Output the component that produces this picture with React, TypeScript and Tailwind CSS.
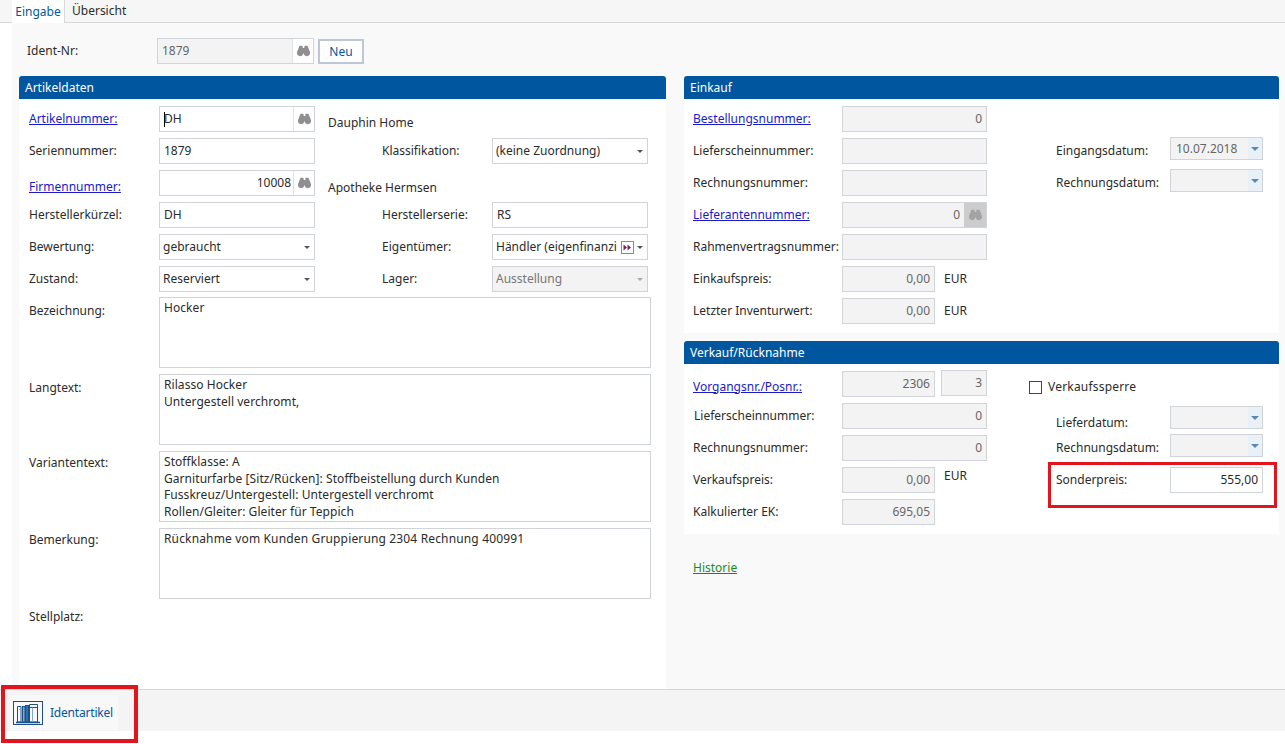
import type { ReactNode } from "react";

function Binoculars({ className = "text-[#8f8f8f]" }: { className?: string }) {
  return (
    <svg viewBox="0 0 16 12" className={`w-[15px] h-[12px] ${className}`} fill="currentColor">
      <path d="M3.200 1.600C3.500.8 4 .5 4.800.5h1.400c.5 0 .9.4.9.9v1.400h1.800V1.400c0-.5.4-.9.9-.9h1.400c.8 0 1.300.3 1.600 1.100l2 5.200c.2.5.2.9.2 1.400 0 1.900-1.500 3.300-3.400 3.300-1.700 0-3.100-1.200-3.300-2.800H7.700c-.2 1.600-1.600 2.800-3.300 2.800C2.500 11.500 1 10.100 1 8.200c0-.5 0-.9.2-1.400z" />
    </svg>
  );
}

function Arrow({ className = "border-t-[#555]" }: { className?: string }) {
  return <span className={`w-0 h-0 border-x-[3px] border-x-transparent border-t-[3px] ${className}`} />;
}

function Label({ children, w }: { children: ReactNode; w: string }) {
  return <span className={`shrink-0 text-[#2b2b2b] ${w}`}>{children}</span>;
}

function LinkLabel({ children, w }: { children: ReactNode; w: string }) {
  return <a className={`shrink-0 text-[#1a1acb] underline ${w}`}>{children}</a>;
}

function Input({
  value = "",
  w = "w-[156px]",
  right = false,
  disabled = false,
  search = false,
  caret = false,
}: {
  value?: string;
  w?: string;
  right?: boolean;
  disabled?: boolean;
  search?: boolean;
  caret?: boolean;
}) {
  return (
    <div
      className={`shrink-0 flex items-stretch h-[26px] border border-[#d0d4d8] ${w} ${
        disabled ? "bg-[#f3f3f3] text-[#666]" : "bg-white text-[#2b2b2b]"
      }`}
    >
      <span className={`flex-1 flex items-center pl-[4px] ${search ? "pr-[2px]" : "pr-[4px]"} ${right ? "justify-end" : ""}`}>
        {caret && <span className="w-px h-[15px] bg-black -mr-px" />}
        {value}
      </span>
      {search && (
        <span className="w-[21px] flex items-center justify-center border-l border-[#dfe2e5] bg-white">
          <Binoculars />
        </span>
      )}
    </div>
  );
}

function Select({ value, disabled = false, extra = false }: { value: string; disabled?: boolean; extra?: boolean }) {
  return (
    <div
      className={`shrink-0 w-[156px] h-[26px] flex items-center border border-[#d0d4d8] pl-[3px] pr-[4px] ${
        disabled ? "bg-[#f3f3f3] text-[#777]" : "bg-white text-[#2b2b2b]"
      }`}
    >
      <span className="flex-1 whitespace-nowrap overflow-hidden">{value}</span>
      {extra && (
        <span className="w-[13px] h-[13px] mr-[3px] shrink-0 border border-[#8a8a8a] flex items-center justify-center text-[#7a1f6a]">
          <svg viewBox="0 0 9 7" className="w-[9px] h-[7px]" fill="currentColor">
            <path d="M0.500 0.500 4 3.500 0.500 6.500zM4.500 0.500 8 3.500 4.500 6.500z" />
          </svg>
        </span>
      )}
      <Arrow className={disabled ? "border-t-[#aaa]" : "border-t-[#555]"} />
    </div>
  );
}

function DateBox({ value = "" }: { value?: string }) {
  return (
    <div className="shrink-0 w-[93px] h-[23px] flex border border-[#d0d4d8] bg-[#f3f3f3] text-[#666]">
      <span className="flex-1 flex items-center pl-[5px]">{value}</span>
      <span className="w-[14px] flex items-center justify-center bg-[#e8f0f8]">
        <span className="w-0 h-0 border-x-[4px] border-x-transparent border-t-[4px] border-t-[#5f86b3]" />
      </span>
    </div>
  );
}

function Area({ lines, tracking = "tracking-[0.06px]" }: { lines: string[]; tracking?: string }) {
  return (
    <div className={`w-[492px] h-[71px] border border-[#d0d4d8] bg-white px-[4px] pt-[2px] leading-[16.500px] text-[#2b2b2b] ${tracking}`}>
      {lines.map((l) => (
        <div key={l}>{l}</div>
      ))}
    </div>
  );
}

function PanelHeader({ children }: { children: ReactNode }) {
  return (
    <div className="h-[23px] flex items-center pl-[6px] bg-[#00579f] text-white rounded-t-[3px]">{children}</div>
  );
}

function Row({ children, className = "" }: { children: ReactNode; className?: string }) {
  return <div className={`h-[26px] flex items-center ${className}`}>{children}</div>;
}

export default function App() {
  return (
    <div className="w-[1285px] h-[744px] overflow-hidden bg-white flex flex-col text-[12px] font-['Noto_Sans',sans-serif] relative">
      {/* tabs */}
      <div className="h-[23px] shrink-0 bg-[#f6f6f6] border-b border-[#d8d8d8] flex pl-[12px]">
        <div className="w-[53px] h-[23px] bg-white border-r border-[#d8d8d8] text-[#00579f] flex items-center justify-center">
          Eingabe
        </div>
        <div className="pl-[7px] flex items-center text-[#2b2b2b]">Übersicht</div>
      </div>

      <div className="flex-1 ml-[12px] bg-[#f9f9f9] flex flex-col min-h-0">
        {/* ident row */}
        <div className="h-[53px] shrink-0 pt-[15px] pl-[15px] flex items-start">
          <span className="w-[130px] h-[26px] flex items-center text-[#2b2b2b]">Ident-Nr:</span>
          <div className="flex">
            <Input value="1879" w="w-[157px]" disabled search />
            <button className="ml-[4px] w-[46px] h-[25px] mt-[1px] bg-white border-2 border-[#bcc8d8] text-[#00579f]">Neu</button>
          </div>
        </div>

        <div className="flex-1 flex pl-[7px] gap-[18px] min-h-0">
          {/* left panel */}
          <div className="w-[647px] bg-white">
            <PanelHeader>Artikeldaten</PanelHeader>
            <div className="pl-[10px] pt-[7px] flex flex-col gap-[6px]">
              <Row>
                <LinkLabel w="w-[130px]">Artikelnummer:</LinkLabel>
                <Input value="DH" search caret />
                <span className="ml-[13px] mt-[8px] text-[#2b2b2b]">Dauphin Home</span>
              </Row>
              <Row>
                <Label w="w-[130px]">Seriennummer:</Label>
                <Input value="1879" />
                <Label w="ml-[67px] w-[110px]">Klassifikation:</Label>
                <Select value="(keine Zuordnung)" />
              </Row>
              <Row>
                <LinkLabel w="w-[130px] mt-[8px]">Firmennummer:</LinkLabel>
                <Input value="10008" right search />
                <span className="ml-[13px] mt-[10px] text-[#2b2b2b]">Apotheke Hermsen</span>
              </Row>
              <Row>
                <Label w="w-[130px]">Herstellerkürzel:</Label>
                <Input value="DH" />
                <Label w="ml-[67px] w-[110px]">Herstellerserie:</Label>
                <Input value="RS" />
              </Row>
              <Row>
                <Label w="w-[130px]">Bewertung:</Label>
                <Select value="gebraucht" />
                <Label w="ml-[67px] w-[110px]">Eigentümer:</Label>
                <Select value="Händler (eigenfinanzi" extra />
              </Row>
              <Row>
                <Label w="w-[130px]">Zustand:</Label>
                <Select value="Reserviert" />
                <Label w="ml-[67px] w-[110px]">Lager:</Label>
                <Select value="Ausstellung" disabled />
              </Row>
              <div className="flex flex-col gap-[6px] -mt-[1px]">
                <div className="flex">
                  <Label w="w-[130px] pt-[5px]">Bezeichnung:</Label>
                  <Area lines={["Hocker"]} />
                </div>
                <div className="flex">
                  <Label w="w-[130px] pt-[5px]">Langtext:</Label>
                  <Area lines={["Rilasso Hocker", "Untergestell verchromt,"]} />
                </div>
                <div className="flex">
                  <Label w="w-[130px] pt-[3px]">Variantentext:</Label>
                  <Area
                    lines={[
                      "Stoffklasse: A",
                      "Garniturfarbe [Sitz/Rücken]: Stoffbeistellung durch Kunden",
                      "Fusskreuz/Untergestell: Untergestell verchromt",
                      "Rollen/Gleiter: Gleiter für Teppich",
                    ]}
                  />
                </div>
                <div className="flex">
                  <Label w="w-[130px] pt-[3px]">Bemerkung:</Label>
                  <Area lines={["Rücknahme vom Kunden Gruppierung 2304 Rechnung 400991"]} tracking="tracking-[0.15px]" />
                </div>
              </div>
              <div className="mt-[3px] text-[#2b2b2b]">Stellplatz:</div>
            </div>
          </div>

          {/* right column */}
          <div className="w-[595px]">
            <div className="bg-white h-[257px]">
              <PanelHeader>Einkauf</PanelHeader>
              <div className="flex pl-[9px] pt-[7px]">
                <div className="flex flex-col gap-[6px]">
                  <Row>
                    <LinkLabel w="w-[149px]">Bestellungsnummer:</LinkLabel>
                    <Input value="0" w="w-[145px]" right disabled />
                  </Row>
                  <Row>
                    <Label w="w-[149px]">Lieferscheinnummer:</Label>
                    <Input w="w-[145px]" disabled />
                  </Row>
                  <Row>
                    <Label w="w-[149px]">Rechnungsnummer:</Label>
                    <Input w="w-[145px]" disabled />
                  </Row>
                  <Row>
                    <LinkLabel w="w-[149px]">Lieferantennummer:</LinkLabel>
                    <div className="w-[145px] h-[26px] flex border border-[#d0d4d8] bg-[#f3f3f3] text-[#666]">
                      <span className="flex-1 flex items-center justify-end pr-[4px]">0</span>
                      <span className="w-[22px] bg-[#cccccc] flex items-center justify-center">
                        <Binoculars className="text-[#a3a3a3]" />
                      </span>
                    </div>
                  </Row>
                  <Row>
                    <Label w="w-[149px]">Rahmenvertragsnummer:</Label>
                    <Input w="w-[145px]" disabled />
                  </Row>
                  <Row>
                    <Label w="w-[149px]">Einkaufspreis:</Label>
                    <Input value="0,00" w="w-[93px]" right disabled />
                    <span className="ml-[9px] text-[#2b2b2b]">EUR</span>
                  </Row>
                  <Row>
                    <Label w="w-[149px]">Letzter Inventurwert:</Label>
                    <Input value="0,00" w="w-[93px]" right disabled />
                    <span className="ml-[9px] text-[#2b2b2b]">EUR</span>
                  </Row>
                </div>
                <div className="ml-[69px] pt-[31px] flex flex-col gap-[9px]">
                  <div className="h-[23px] flex items-center">
                    <Label w="w-[114px] pt-[5px]">Eingangsdatum:</Label>
                    <DateBox value="10.07.2018" />
                  </div>
                  <div className="h-[23px] flex items-center">
                    <Label w="w-[114px] pt-[4px]">Rechnungsdatum:</Label>
                    <DateBox />
                  </div>
                </div>
              </div>
            </div>

            <div className="bg-white h-[193px] mt-[8px]">
              <PanelHeader>Verkauf/Rücknahme</PanelHeader>
              <div className="flex pl-[9px] pt-[7px]">
                <div className="flex flex-col gap-[6px]">
                  <Row>
                    <LinkLabel w="w-[149px] mt-[5px]">Vorgangsnr./Posnr.:</LinkLabel>
                    <Input value="2306" w="w-[93px]" right disabled />
                    <span className="ml-[6px] -mt-[2px]">
                      <Input value="3" w="w-[46px]" right disabled />
                    </span>
                  </Row>
                  <Row>
                    <Label w="w-[149px] pl-px">Lieferscheinnummer:</Label>
                    <Input value="0" w="w-[145px]" right disabled />
                  </Row>
                  <Row>
                    <Label w="w-[149px]">Rechnungsnummer:</Label>
                    <Input value="0" w="w-[145px]" right disabled />
                  </Row>
                  <Row>
                    <Label w="w-[149px]">Verkaufspreis:</Label>
                    <Input value="0,00" w="w-[93px]" right disabled />
                    <span className="ml-[9px] -mt-[8px] text-[#2b2b2b]">EUR</span>
                  </Row>
                  <Row>
                    <Label w="w-[149px]">Kalkulierter EK:</Label>
                    <Input value="695,05" w="w-[93px]" right disabled />
                  </Row>
                </div>
                <div className="ml-[42px] flex flex-col">
                  <div className="h-[32px] flex items-center">
                    <span className="w-[13px] h-[13px] border border-[#444] bg-white mr-[6px]" />
                    <span className="text-[#2b2b2b] tracking-[0.2px]">Verkaufssperre</span>
                  </div>
                  <div className="pl-[27px] pt-[3px] flex flex-col gap-[5px]">
                    <div className="h-[23px] flex items-center">
                      <Label w="w-[114px] pt-[11px]">Lieferdatum:</Label>
                      <DateBox />
                    </div>
                    <div className="h-[23px] flex items-center">
                      <Label w="w-[114px] pt-[4px]">Rechnungsdatum:</Label>
                      <DateBox />
                    </div>
                  </div>
                  <div className="ml-[19px] mt-[5px] w-[229px] h-[46px] border-[3px] border-[#e3151c] flex items-start pl-[5px] pt-[2px]">
                    <Label w="w-[114px] leading-[26px]">Sonderpreis:</Label>
                    <Input value="555,00" w="w-[93px]" right />
                  </div>
                </div>
              </div>
            </div>

            <a className="block mt-[25px] ml-[9px] text-[#1a8a1a] underline">Historie</a>
          </div>
        </div>
      </div>

      {/* bottom bar */}
      <div className="h-[42px] shrink-0 mb-[13px] bg-[#f4f4f4] border-t border-[#d5d5d5] relative flex items-center">
        <div className="ml-[10px] mt-[4px] w-[108px] h-[35px] bg-[#f8f8f8] flex items-center pl-[3px] text-[#00579f]">
          <svg viewBox="0 0 30 24" className="w-[30px] h-[24px] shrink-0" fill="none" stroke="#1d4f86" strokeWidth="1">
            <rect x="0.500" y="0.500" width="29" height="23" />
            <path d="M3 21.500h24" strokeWidth="1.500" />
            <path d="M4.500 5.500h3.500v15.500H4.500zM6 8.500h0.500" />
            <rect x="9.500" y="5.500" width="2.500" height="15.500" fill="#7fa9d2" />
            <rect x="12.500" y="4.500" width="3" height="16.500" fill="#2e6fae" />
            <path d="M16.500 3.500h8v17.500h-8zM16.500 6.500h8" />
            <path d="M19.500 6.500v14.500" stroke="#7fa9d2" />
          </svg>
          <span className="ml-[7px] tracking-[-0.2px]">Identartikel</span>
        </div>
        <div className="absolute left-[1px] -top-[5px] w-[137px] h-[58px] border-[4px] border-[#e3151c]" />
      </div>
    </div>
  );
}
